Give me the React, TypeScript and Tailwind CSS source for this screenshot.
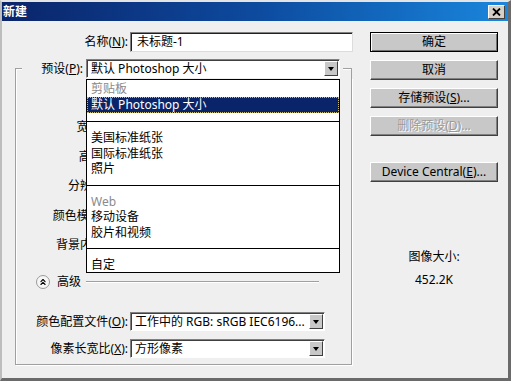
import { ChevronsUp } from "lucide-react";
import type { ReactNode } from "react";

function Arrow({ h = "h-[15px]" }: { h?: string }) {
  return (
    <div
      className={`ml-auto mr-px w-[14px] ${h} bg-[#c8c8c8] border border-t-white border-l-white border-r-[#404040] border-b-[#404040] flex items-center justify-center`}
    >
      <div className="w-0 h-0 border-l-[3.5px] border-r-[3.5px] border-t-[4px] border-l-transparent border-r-transparent border-t-black" />
    </div>
  );
}

function Select({ w, children }: { w: string; children: ReactNode }) {
  return (
    <div
      className={`flex items-center h-[19px] bg-white border border-t-[#808080] border-l-[#808080] border-r-white border-b-white shadow-[inset_1px_1px_0_#404040] ${w}`}
    >
      <span className="pl-[4px] whitespace-nowrap">{children}</span>
      <Arrow />
    </div>
  );
}

function Btn({
  children,
  primary,
  disabled,
}: {
  children: ReactNode;
  primary?: boolean;
  disabled?: boolean;
}) {
  const edge = primary
    ? "border border-black shadow-[inset_1px_1px_0_#fff,inset_-1px_-1px_0_#707070]"
    : "border border-t-white border-l-white border-r-[#404040] border-b-[#404040] shadow-[inset_-1px_-1px_0_#808080]";
  return (
    <div
      className={`h-[20px] w-full bg-[#c8c8c8] flex items-center justify-center ${edge} ${
        disabled ? "text-[#9a9a9a] [text-shadow:1px_1px_0_#fff]" : "text-black"
      }`}
    >
      {children}
    </div>
  );
}

function Row({ children }: { children: ReactNode }) {
  return <div className="h-[15.5px] leading-[15.5px] pl-[4px]">{children}</div>;
}

function Sep() {
  return <div className="h-px bg-black" />;
}

// open dropdown of the preset select, drawn over the size fields
function PresetList() {
  return (
    <div className="absolute left-0 top-[20px] z-10 w-[254px] bg-white border border-black">
      <div className="pb-[8px]">
        <div className="h-[17px] leading-[17px] pl-[4px] text-[#8a8a8a]">剪贴板</div>
        <div className="h-[16px] leading-[14px] pl-[3px] bg-[#0a246a] text-white border border-dotted border-[#c8b878]">
          默认 Photoshop 大小
        </div>
      </div>
      <Sep />
      <div className="py-[8px]">
        <Row>美国标准纸张</Row>
        <Row>国际标准纸张</Row>
        <Row>照片</Row>
      </div>
      <Sep />
      <div className="py-[8px]">
        <Row>
          <span className="text-[#8a8a8a]">Web</span>
        </Row>
        <Row>移动设备</Row>
        <Row>胶片和视频</Row>
      </div>
      <Sep />
      <div className="pt-[8px]">
        <div className="h-[15px] leading-[15px] pl-[4px]">自定</div>
      </div>
    </div>
  );
}

function Label({ children }: { children: ReactNode }) {
  return <div className="w-[112px] text-right whitespace-nowrap shrink-0">{children}</div>;
}

function HiddenLabel({ children }: { children: ReactNode }) {
  return (
    <div className="h-[20px] flex items-center">
      <div className="w-[106px] text-right whitespace-nowrap shrink-0">{children}</div>
    </div>
  );
}

export default function App() {
  return (
    <div className="w-[511px] h-[381px] overflow-hidden flex flex-col bg-[#efefef] border-t-2 border-l-2 border-r-[3px] border-b-[3px] border-t-[#e4e4e4] border-l-[#bdbdbd] border-r-[#6a6a6a] border-b-[#6a6a6a] text-[12px] text-black font-['Noto_Sans','Noto_Sans_CJK_SC',sans-serif]">
      {/* Title bar */}
      <div className="h-[19px] shrink-0 flex items-center bg-linear-to-r from-[#0a246a] via-[#0d4a9e] to-[#1a86dc] pl-[1px] pr-[3px]">
        <span className="text-white font-bold leading-none">新建</span>
        <div className="ml-auto w-[17px] h-[14px] bg-[#d4d0c8] border border-t-white border-l-white border-r-[#404040] border-b-[#404040] flex items-center justify-center">
          <svg width="9" height="8" viewBox="0 0 9 8">
            <path d="M1 0.5 L8 7.5 M8 0.5 L1 7.5" stroke="black" strokeWidth="1.8" />
          </svg>
        </div>
      </div>

      <div className="flex pt-[11px]">
        {/* Left column */}
        <div className="w-[368px] shrink-0">
          <div className="flex items-center h-[20px]">
            <div className="w-[126px] text-right">
              名称(<u>N</u>):
            </div>
            <div className="ml-[2px] w-[223px] h-[20px] bg-white flex items-center pl-[6px] border border-t-[#808080] border-l-[#808080] border-r-[#dcdcdc] border-b-[#dcdcdc] shadow-[inset_1px_1px_0_#202020]">
              未标题-1
            </div>
          </div>

          {/* Group box */}
          <div className="ml-[13px] w-[337px] mt-[7px]">
            <div className="flex h-[19px]">
              <div className="self-end w-[7px] h-[10px] border-t border-l border-[#a0a0a0] shadow-[inset_1px_1px_0_#fff]" />
              <div className="w-[48px] ml-[13px] text-right self-center whitespace-nowrap">
                预设(<u>P</u>):
              </div>
              <div className="relative ml-[3px] w-[254px]">
                <Select w="w-[254px]">默认 Photoshop 大小</Select>
                <PresetList />
              </div>
              <div className="self-end ml-[3px] w-[9px] h-[10px] border-t border-r border-[#a0a0a0] shadow-[inset_0_1px_0_#fff]" />
            </div>
            <div className="border-l border-r border-b border-[#a0a0a0] shadow-[inset_1px_0_0_#fff,1px_1px_0_#fff] pt-[39px] pb-[6px]">
              <div className="flex flex-col gap-[9.5px]">
                <HiddenLabel>宽度(<u>W</u>):</HiddenLabel>
                <HiddenLabel>高度(<u>H</u>):</HiddenLabel>
                <HiddenLabel>分辨率(<u>R</u>):</HiddenLabel>
                <HiddenLabel>颜色模式(<u>M</u>):</HiddenLabel>
                <HiddenLabel>背景内容(<u>C</u>):</HiddenLabel>
              </div>

              <div className="mt-[20px] h-[14px] flex items-center">
                <div className="ml-[20px] w-[14px] h-[14px] rounded-full bg-[#f6f6f6] border border-[#9a9a9a] flex items-center justify-center">
                  <ChevronsUp size={10} strokeWidth={2.6} />
                </div>
                <span className="ml-[7px] leading-none">高级</span>
                <div className="ml-[5px] w-[233px] h-[2px] border-t border-[#a0a0a0] border-b border-b-white" />
              </div>

              <div className="mt-[23px] flex items-center">
                <Label>颜色配置文件(<u>O</u>):</Label>
                <div className="ml-[2px]">
                  <Select w="w-[195px]">工作中的 RGB: sRGB IEC6196...</Select>
                </div>
              </div>
              <div className="mt-[8px] flex items-center">
                <Label>像素长宽比(<u>X</u>):</Label>
                <div className="ml-[2px]">
                  <Select w="w-[195px]">方形像素</Select>
                </div>
              </div>
            </div>
          </div>
        </div>

        {/* Right column */}
        <div className="w-[128px] shrink-0 flex flex-col">
          <Btn primary>确定</Btn>
          <div className="mt-[8px]">
            <Btn>取消</Btn>
          </div>
          <div className="mt-[8px]">
            <Btn>
              存储预设(<u>S</u>)...
            </Btn>
          </div>
          <div className="mt-[8px]">
            <Btn disabled>
              删除预设(<u>D</u>)...
            </Btn>
          </div>
          <div className="mt-[26px]">
            <Btn>
              Device Central(<u>E</u>)...
            </Btn>
          </div>
          <div className="mt-[68px] text-center leading-[14px]">图像大小:</div>
          <div className="mt-[9px] text-center leading-[14px]">452.2K</div>
        </div>
      </div>
    </div>
  );
}
